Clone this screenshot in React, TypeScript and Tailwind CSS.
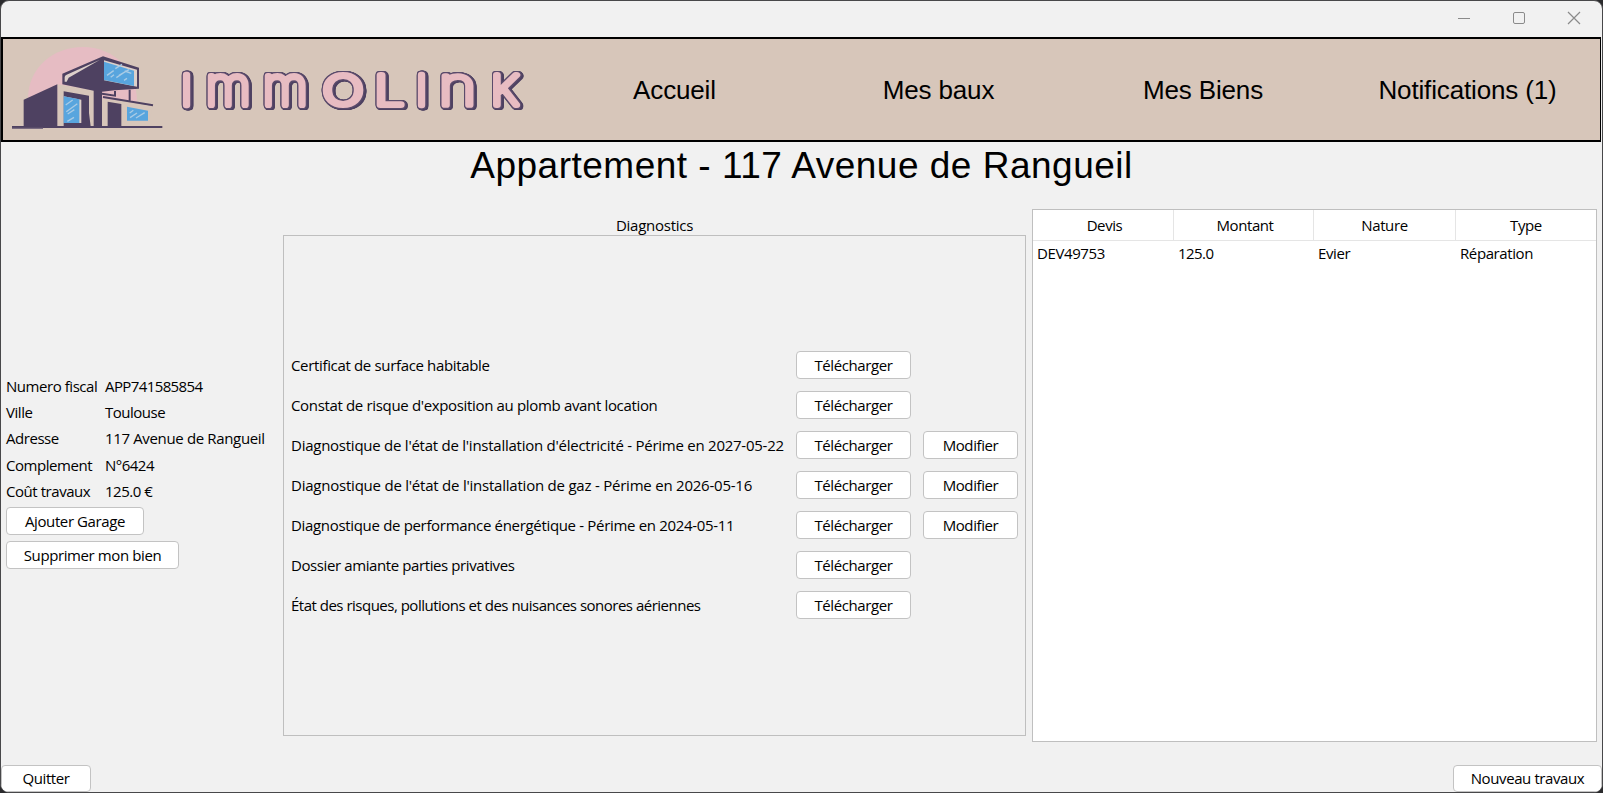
import React from "react";

const Button = ({ children, className = "" }: { children: React.ReactNode; className?: string }) => (
  <button
    className={`flex h-7 shrink-0 items-center justify-center whitespace-nowrap rounded-[4px] border border-[#c3c3c3] bg-white pb-px ${className}`}
  >
    {children}
  </button>
);

const details: [string, string, string][] = [
  ["Numero fiscal", "APP741585854", "tracking-[-0.6px]"],
  ["Ville", "Toulouse", "tracking-[-0.5px]"],
  ["Adresse", "117 Avenue de Rangueil", "tracking-[-0.35px]"],
  ["Complement", "N°6424", "tracking-[-0.5px]"],
  ["Coût travaux", "125.0 €", "tracking-[-0.5px]"],
];

const diagnostics: { label: string; spacing: string; editable?: boolean }[] = [
  { label: "Certificat de surface habitable", spacing: "tracking-[-0.34px]" },
  { label: "Constat de risque d'exposition au plomb avant location", spacing: "tracking-[-0.34px]" },
  {
    label: "Diagnostique de l'état de l'installation d'électricité - Périme en 2027-05-22",
    spacing: "tracking-[-0.25px]",
    editable: true,
  },
  {
    label: "Diagnostique de l'état de l'installation de gaz - Périme en 2026-05-16",
    spacing: "tracking-[-0.225px]",
    editable: true,
  },
  {
    label: "Diagnostique de performance énergétique - Périme en 2024-05-11",
    spacing: "tracking-[-0.325px]",
    editable: true,
  },
  { label: "Dossier amiante parties privatives", spacing: "tracking-[-0.4px]" },
  { label: "État des risques, pollutions et des nuisances sonores aériennes", spacing: "tracking-[-0.5px]" },
];

const House = () => (
  <svg className="h-[99px] w-[167px] shrink-0" viewBox="9 27 501 297">
    <path d="M84 204 C84 108 162 48 248 48 C342 48 411 118 411 212 L300 212 L84 212 Z" fill="#e6bcc3" />
    <path d="M172 160 L284 178 L460 222 L444 286 L172 286 Z" fill="#d7c6ba" />
    <path d="M284 178 L400 178 L411 212 L309 204 Z" fill="#e6bcc3" />
    <path d="M71 206 L172 160 V286 H71 Z" fill="#4e4161" />
    <path d="M187 128 L309 76 L417 110 V173 L344 178 L306 182 V286 H281 V179 L187 160 Z" fill="#4e4161" />
    <path d="M194 152 V138 Q194 133 200 131 L300 86 L206 140 L200 152 Z" fill="#ddd0ca" />
    <path d="M312 88 L411 116 V167 L312 148 Z" fill="#ddd0ca" />
    <path d="M312 92 L402 119 V165 L312 147 Z" fill="#58a5de" />
    <path d="M321 133 L341 119 M346 113 L366 100 M332 139 L342 131 M349 140 L370 126 M374 120 L394 127 M372 148 L381 142 M357 133 L387 116" stroke="#a9cbe5" strokeWidth="4" />
    <path d="M191 181 L267 194 V246 L272 286 H191 Z" fill="#4e4161" />
    <path d="M191 196 L244 206 V276 H191 Z" fill="#ddd0ca" />
    <path d="M191 196 L238 205 V276 H191 Z" fill="#58a5de" />
    <path d="M197 222 L218 207 M199 242 L232 218 M203 249 L223 236 M202 271 L222 259" stroke="#a9cbe5" strokeWidth="4" />
    <path d="M306 188 L345 194 V180 M389 176 V210 M309 198 L459 223" fill="none" stroke="#4e4161" strokeWidth="6" />
    <path d="M309 204 L450 226 V286 H309 Z" fill="#d7c6ba" />
    <path d="M323 212 L364 219 V286 H323 Z" fill="#4e4161" />
    <path d="M381 227 L444 239 V269 H381 Z" fill="#58a5de" />
    <path d="M389 246 L400 238 M390 260 L411 246 M408 261 L434 245" stroke="#a9cbe5" strokeWidth="4" />
    <path d="M36 288 H487" stroke="#4e4161" strokeWidth="6" />
    <path d="M36 292 H129" stroke="#7a6c80" strokeWidth="4" />
  </svg>
);

const wordmark: { ch: string; cx: number; size: number; sx: number; stroke: number }[] = [
  { ch: "I", cx: 186.3, size: 40.5, sx: 1, stroke: 6.4 },
  { ch: "m", cx: 228, size: 53.5, sx: 0.97, stroke: 6.2 },
  { ch: "m", cx: 285, size: 53.5, sx: 0.97, stroke: 6.2 },
  { ch: "O", cx: 342.7, size: 40, sx: 1.34, stroke: 6.2 },
  { ch: "L", cx: 389, size: 40.5, sx: 1.3, stroke: 5.8 },
  { ch: "I", cx: 421.4, size: 40.5, sx: 1, stroke: 6.4 },
  { ch: "n", cx: 457.2, size: 53.5, sx: 1.2, stroke: 5.7 },
  { ch: "K", cx: 504.5, size: 40.5, sx: 1.12, stroke: 6 },
];

const Wordmark = () => (
  <svg className="ml-[5px] h-[99px] w-[365px] shrink-0" viewBox="175 39 365 99">
    <g
      className="font-[Inter,sans-serif] [filter:drop-shadow(1px_0_0_#5b4b6b)_drop-shadow(-1px_0_0_#5b4b6b)_drop-shadow(0_1px_0_#5b4b6b)_drop-shadow(0_-1px_0_#5b4b6b)_drop-shadow(1px_1px_0_#4e4161)_drop-shadow(1px_0_0_#4e4161)]"
      fill="#e8bcc2"
      stroke="#e8bcc2"
      strokeLinejoin="round"
      strokeLinecap="round"
      fontWeight="100"
      textAnchor="middle"
    >
      {wordmark.map((l) => (
        <text
          key={l.cx}
          transform={`translate(${l.cx} 104) scale(${l.sx} 1)`}
          fontSize={l.size}
          strokeWidth={l.stroke}
        >
          {l.ch}
        </text>
      ))}
    </g>
  </svg>
);

export default function App() {
  return (
    <div className="h-[793px] w-[1603px] overflow-hidden bg-[#2b2b2d] font-['Open_Sans',sans-serif] text-[15px] leading-5 tracking-[-0.4px] text-black">
      <div className="flex h-full w-full flex-col overflow-hidden rounded-[9px] border border-[#48484a] bg-[#f1f1f1]">
        <div className="flex h-9 shrink-0 items-center justify-end gap-[43px] pb-[2px] pr-[22px] text-[#8a8a8a]">
          <svg className="h-3 w-3" viewBox="0 0 12 12" stroke="currentColor"><path d="M0 6.5H12" /></svg>
          <svg className="h-3 w-3" viewBox="0 0 12 12" stroke="currentColor" fill="none"><rect x=".5" y=".5" width="11" height="11" rx="1.5" /></svg>
          <svg className="h-3 w-3 overflow-visible" viewBox="0 0 12 12" stroke="currentColor" strokeWidth="1.2"><path d="M0 0L12 12M12 0L0 12" /></svg>
        </div>

        <header className="mr-px flex h-[105px] shrink-0 items-center border-2 border-r border-black bg-[#d7c6ba]">
          <House />
          <Wordmark />
          <nav className="-ml-[4px] grid flex-1 grid-cols-[277px_251px_278px_251px] font-['Liberation_Sans',Arial,sans-serif] text-[26px] tracking-[-0.15px]">
            <a className="text-center">Accueil</a>
            <a className="text-center">Mes baux</a>
            <a className="text-center">Mes Biens</a>
            <a className="text-center">Notifications (1)</a>
          </nav>
        </header>

        <h1 className="mt-px h-[66px] shrink-0 text-center font-['Liberation_Sans',Arial,sans-serif] text-[37px] leading-[45px] tracking-[0.5px]">
          Appartement - 117 Avenue de Rangueil
        </h1>

        <main className="flex h-[535px] shrink-0">
          <aside className="flex w-[282px] flex-col items-start pl-[5px] pt-[164px]">
            <dl className="grid grid-cols-[99px_auto] leading-[26.2px]">
              {details.map(([k, v, spacing]) => (
                <React.Fragment key={k}>
                  <dt className="tracking-[-0.45px]">{k}</dt>
                  <dd className={spacing}>{v}</dd>
                </React.Fragment>
              ))}
            </dl>
            <Button className="mt-[3px] w-[138px]">Ajouter Garage</Button>
            <Button className="mt-1.5 w-[173px]">Supprimer mon bien</Button>
          </aside>

          <section className="flex w-[743px] flex-col pt-[6px]">
            <h2 className="h-5 text-center tracking-[-0.25px]">Diagnostics</h2>
            <div className="flex h-[501px] flex-col gap-3 border border-[#bfbfbf] pl-[7px] pt-[115px]">
              {diagnostics.map((d) => (
                <div key={d.label} className="flex h-7 items-center">
                  <span className={`w-[505px] whitespace-nowrap pb-px ${d.spacing}`}>{d.label}</span>
                  <Button className="w-[115px]">Télécharger</Button>
                  {d.editable && <Button className="ml-3 w-[95px]">Modifier</Button>}
                </div>
              ))}
            </div>
          </section>

          <section className="ml-[6px] h-[533px] w-[565px] border border-[#bfbfbf] bg-white">
            <div className="grid h-[31px] grid-cols-[141px_140px_142px_140px] items-center border-b border-[#e5e5e5] text-center">
              <div className="h-full border-r border-[#e5e5e5] pl-[3px] pt-[5px]">Devis</div>
              <div className="h-full border-r border-[#e5e5e5] pl-[3px] pt-[5px]">Montant</div>
              <div className="h-full border-r border-[#e5e5e5] pt-[5px]">Nature</div>
              <div className="h-full pt-[5px]">Type</div>
            </div>
            <div className="grid h-[24px] grid-cols-[141px_140px_142px_140px] items-center pl-1">
              <span>DEV49753</span>
              <span className="tracking-[-0.55px]">125.0</span>
              <span>Evier</span>
              <span>Réparation</span>
            </div>
          </section>
        </main>

        <footer className="mt-auto flex justify-between">
          <Button className="h-[27px] w-[90px]">Quitter</Button>
          <Button className="h-[27px] w-[149px]">Nouveau travaux</Button>
        </footer>
      </div>
    </div>
  );
}
